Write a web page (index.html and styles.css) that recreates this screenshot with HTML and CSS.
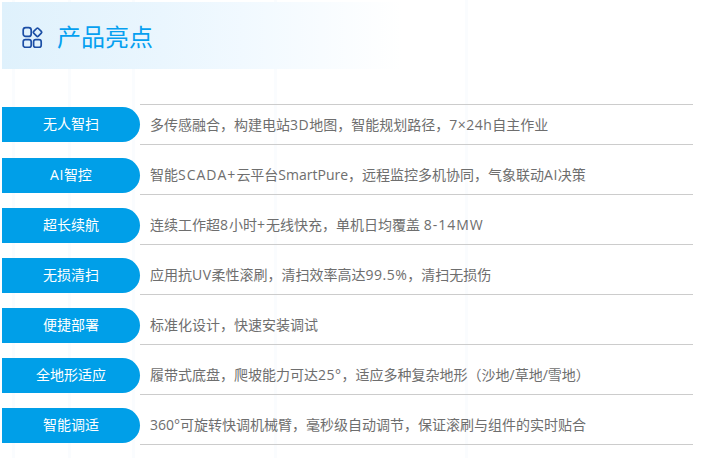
FILE: index.html
```html
<!DOCTYPE html>
<html lang="zh-CN">
<head>
<meta charset="utf-8">
<title>产品亮点</title>
<link rel="stylesheet" href="styles.css">
</head>
<body>
<div class="page">
  <header class="head">
    <svg class="head-icon" width="22" height="22" viewBox="0 0 22 22" fill="none" stroke="#1b4ea5" stroke-width="1.7">
      <rect x="1.2" y="1.6" width="8" height="8.8" rx="2.5"/>
      <rect x="12.2" y="3" width="6.6" height="6.6" rx="1.2" transform="rotate(45 15.5 6.3)"/>
      <rect x="1.2" y="13.6" width="8" height="7.8" rx="2.2"/>
      <rect x="11.6" y="13.6" width="7.6" height="7.8" rx="2.2"/>
    </svg>
    <h1 class="title">产品亮点</h1>
  </header>
  <ul class="list">
    <li class="row row-first"><span class="pill">无人智扫</span><span class="desc">多传感融合，构建电站<span class="lat">3D</span>地图，智能规划路径，<span class="lat">7×24h</span>自主作业</span></li>
    <li class="row"><span class="pill"><span class="lat">AI</span>智控</span><span class="desc">智能<span class="lat-w">SCADA+</span>云平台SmartPure，远程监控多机协同，气象联动<span class="lat">AI</span>决策</span></li>
    <li class="row"><span class="pill">超长续航</span><span class="desc">连续工作超<span class="lat-w">8</span>小时<span class="lat-w">+</span>无线快充，单机日均覆盖 <span class="lat-w">8-14MW</span></span></li>
    <li class="row"><span class="pill">无损清扫</span><span class="desc">应用抗<span class="lat">UV</span>柔性滚刷，清扫效率高达<span class="lat">99.5%</span>，清扫无损伤</span></li>
    <li class="row"><span class="pill">便捷部署</span><span class="desc">标准化设计，快速安装调试</span></li>
    <li class="row"><span class="pill">全地形适应</span><span class="desc">履带式底盘，爬坡能力可达<span class="lat">25°</span>，适应多种复杂地形（沙地/草地/雪地）</span></li>
    <li class="row"><span class="pill">智能调适</span><span class="desc">360°可旋转快调机械臂，毫秒级自动调节，保证滚刷与组件的实时贴合</span></li>
  </ul>
</div>
</body>
</html>
```
FILE: styles.css
```css
* { box-sizing: border-box; margin: 0; padding: 0; }
html, body { background: #fff; }
body {
  width: 705px;
  height: 458px;
  overflow: hidden;
  font-family: "Open Sans", "Noto Sans CJK SC", sans-serif;
}
.page {
  height: 458px;
  padding: 2px 12px 0 2px;
  background-image:
    linear-gradient(#fafcfe, #fafcfe),
    linear-gradient(#fafcfe, #fafcfe),
    linear-gradient(#fafcfe, #fafcfe),
    linear-gradient(#fafcfe, #fafcfe),
    linear-gradient(#fafcfe, #fafcfe);
  background-size: 3px 100%;
  background-repeat: no-repeat;
  background-position: 12px 0, 68px 0, 132px 0, 274px 0, 465px 0;
}
.head {
  height: 67px;
  width: 400px;
  display: flex;
  align-items: center;
  gap: 13px;
  padding: 3px 0 0 20px;
  background: linear-gradient(90deg, #dff1fc 0%, #eaf6fe 40%, #f1f9ff 60%, #f8fcff 80%, #ffffff 100%);
}
.head-icon { flex: none; }
.title {
  font-size: 24px;
  font-weight: 400;
  line-height: 32px;
  color: #05a0f0;
}
.list { list-style: none; margin-top: 35px; }
.row {
  display: flex;
  align-items: flex-end;
  height: 50px;
  border-bottom: 1px solid #cccccc;
  margin-left: 138px;
  padding-bottom: 1px;
}
.row-first {
  height: 41px;
  border-top: 1px solid #cccccc;
  padding-bottom: 2px;
}
.pill {
  flex: none;
  width: 138px;
  height: 35px;
  margin-left: -138px;
  background: #009fe8;
  color: #fff;
  font-size: 14px;
  line-height: 34px;
  text-align: center;
  border-radius: 0 18px 18px 0;
}
.desc {
  height: 35px;
  line-height: 33px;
  margin-left: 10px;
  font-size: 14px;
  color: #6e6e6e;
  white-space: nowrap;
}
.row-first .desc { line-height: 35px; }
.lat { letter-spacing: 0.5px; }
.lat-w { letter-spacing: 1px; }
```
